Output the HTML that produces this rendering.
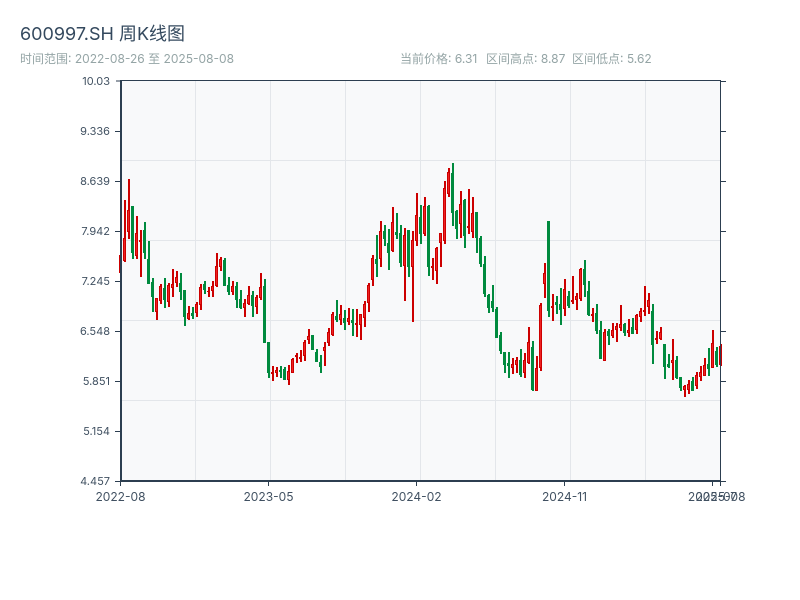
<!DOCTYPE html>
<html><head><meta charset="utf-8"><style>
html,body{margin:0;padding:0;background:#fff}
svg{display:block}
text{font-family:"Inter","Helvetica Neue",Arial,sans-serif}
</style></head><body>
<svg width="800" height="600" viewBox="0 0 800 600" xmlns="http://www.w3.org/2000/svg">
<rect width="800" height="600" fill="#fff"/>
<text x="20" y="40" font-size="18" fill="#34495e">600997.SH 周K线图</text>
<text x="20" y="63" font-size="12" fill="#95a5a6">时间范围: 2022-08-26 至 2025-08-08</text>
<text x="400" y="63" font-size="12" fill="#95a5a6">当前价格: 6.31</text>
<text x="486" y="63" font-size="12" fill="#95a5a6">区间高点: 8.87</text>
<text x="572" y="63" font-size="12" fill="#95a5a6">区间低点: 5.62</text>
<rect x="120" y="80" width="600" height="400" fill="#f8f9fa"/>
<path shape-rendering="crispEdges" stroke="#e3e6ea" stroke-width="1" fill="none" d="M195.5 80V480M270.5 80V480M345.5 80V480M420.5 80V480M495.5 80V480M570.5 80V480M645.5 80V480M120 160.5H720M120 240.5H720M120 320.5H720M120 400.5H720"/>
<path shape-rendering="crispEdges" stroke="#cc0000" stroke-width="2" fill="none" d="M121 255V273M125 200V262M129 179V239M137 216V259M141 230V277M157 298V320M161 284V304M169 283V307M173 269V297M177 271V287M189 306V320M197 302V317M201 284V310M209 287V297M213 281V297M217 253V287M221 257V271M233 281V295M245 299V317M249 286V305M257 295V314M261 273V300M273 366V381M277 367V377M289 365V385M293 358V373M297 353V363M301 350V362M305 340V361M309 329V344M325 342V366M329 328V346M333 312V336M341 305V325M349 308V325M357 309V337M361 314V340M365 301V327M369 283V312M373 255V286M381 221V267M393 207V252M405 228V301M413 231V322M417 193V246M425 197V236M433 258V280M437 247V284M441 233V267M445 181V244M449 168V197M461 191V238M469 189V234M473 197V238M513 358V374M517 357V373M525 353V378M529 327V364M537 356V391M541 303V371M545 263V298M553 294V321M565 279V316M573 276V304M577 293V310M581 268V301M593 308V322M605 329V361M613 323V338M617 323V342M621 305V331M629 319V337M637 314V334M641 308V322M645 286V316M649 293V314M657 331V344M661 327V340M673 339V380M685 385V397M689 380V394M697 372V389M701 366V381M705 358V376M713 330V368M721 344V366"/>
<path shape-rendering="crispEdges" stroke="#008a3e" stroke-width="2" fill="none" d="M133 206V259M145 222V259M149 241V284M153 278V312M165 278V308M181 273V300M185 290V326M193 307V319M205 281V294M225 258V286M229 277V295M237 282V308M241 290V309M253 291V317M265 279V343M269 342V378M281 366V378M285 367V380M313 335V350M317 349V362M321 355V373M337 300V322M345 310V330M353 309V336M377 235V277M385 225V246M389 229V270M397 213V239M401 225V267M409 230V277M421 205V244M429 205V276M453 163V226M457 210V239M465 199V248M477 212V253M481 236V267M485 256V297M489 294V313M493 285V312M497 307V338M501 332V354M505 352V373M509 352V378M521 349V377M533 341V391M549 221V317M557 296V314M561 288V325M569 291V308M585 260V297M589 281V316M597 304V334M601 321V359M609 329V345M625 323V336M633 318V334M653 304V364M665 344V379M669 354V368M677 356V379M681 377V391M693 377V391M709 348V376M717 347V367"/>
<path shape-rendering="crispEdges" stroke="#cc0000" stroke-width="3" fill="none" d="M120.5 255V273M124.5 238V261M128.5 210V232M136.5 233V256M140.5 240V242M156.5 298V312M160.5 286V301M168.5 285V302M172.5 284V288M176.5 277V283M188.5 313V319M196.5 304V313M200.5 287V305M208.5 291V292M212.5 286V291M216.5 266V286M220.5 259V267M232.5 286V292M244.5 303V308M248.5 295V304M256.5 297V307M260.5 287V298M272.5 372V374M276.5 370V373M288.5 371V380M292.5 359V373M296.5 355V357M300.5 357V359M304.5 342V356M308.5 336V340M324.5 347V351M328.5 332V343M332.5 314V335M340.5 314V320M348.5 318V322M356.5 323V325M360.5 314V325M364.5 304V318M368.5 285V303M372.5 258V280M380.5 231V259M392.5 222V251M404.5 235V266M412.5 240V267M416.5 215V241M424.5 206V234M432.5 266V268M436.5 248V271M440.5 233V243M444.5 188V241M448.5 172V194M460.5 204V224M468.5 226V228M472.5 213V232M512.5 364V368M516.5 360V365M524.5 360V373M528.5 342V363M536.5 368V391M540.5 305V368M544.5 273V284M552.5 306V308M564.5 289V309M572.5 300V302M576.5 296V300M580.5 269V299M592.5 314V316M604.5 332V361M612.5 330V336M616.5 326V330M620.5 324V328M628.5 330V333M636.5 315V330M640.5 311V317M644.5 310V312M648.5 300V307M656.5 338V340M660.5 332V339M672.5 360V363M684.5 386V390M688.5 384V390M696.5 375V386M700.5 372V377M704.5 365V376M712.5 343V368M720.5 346V365"/>
<path shape-rendering="crispEdges" stroke="#ee2222" stroke-width="1" fill="none" d="M120.5 256V272M124.5 239V260M128.5 211V231M136.5 234V255M156.5 299V311M160.5 287V300M168.5 286V301M172.5 285V287M176.5 278V282M188.5 314V318M196.5 305V312M200.5 288V304M212.5 287V290M216.5 267V285M220.5 260V266M232.5 287V291M244.5 304V307M248.5 296V303M256.5 298V306M260.5 288V297M276.5 371V372M288.5 372V379M292.5 360V372M304.5 343V355M308.5 337V339M324.5 348V350M328.5 333V342M332.5 315V334M340.5 315V319M348.5 319V321M360.5 315V324M364.5 305V317M368.5 286V302M372.5 259V279M380.5 232V258M392.5 223V250M404.5 236V265M412.5 241V266M416.5 216V240M424.5 207V233M436.5 249V270M440.5 234V242M444.5 189V240M448.5 173V193M460.5 205V223M472.5 214V231M512.5 365V367M516.5 361V364M524.5 361V372M528.5 343V362M536.5 369V390M540.5 306V367M544.5 274V283M564.5 290V308M576.5 297V299M580.5 270V298M604.5 333V360M612.5 331V335M616.5 327V329M620.5 325V327M628.5 331V332M636.5 316V329M640.5 312V316M648.5 301V306M660.5 333V338M672.5 361V362M684.5 387V389M688.5 385V389M696.5 376V385M700.5 373V376M704.5 366V375M712.5 344V367M720.5 347V364"/>
<path shape-rendering="crispEdges" stroke="#008a3e" stroke-width="3" fill="none" d="M132.5 206V253M144.5 230V253M148.5 259V284M152.5 282V297M164.5 288V300M180.5 283V292M184.5 290V317M192.5 313V316M204.5 284V290M224.5 260V286M228.5 285V292M236.5 286V300M240.5 299V308M252.5 295V306M264.5 286V343M268.5 342V373M280.5 370V372M284.5 369V380M312.5 335V350M316.5 352V362M320.5 362V367M336.5 316V320M344.5 318V323M352.5 320V323M376.5 259V264M384.5 231V239M388.5 243V253M396.5 232V235M400.5 233V263M408.5 230V267M420.5 217V234M428.5 206V267M452.5 173V213M456.5 211V229M464.5 200V236M476.5 212V238M480.5 238V264M484.5 264V294M488.5 295V308M492.5 301V308M496.5 309V338M500.5 335V351M504.5 352V365M508.5 363V366M520.5 360V375M532.5 347V390M548.5 221V311M556.5 302V305M560.5 304V310M568.5 296V306M584.5 269V285M588.5 291V315M596.5 313V331M600.5 330V359M608.5 331V336M624.5 324V333M632.5 327V334M652.5 311V345M664.5 344V367M668.5 364V367M676.5 360V378M680.5 377V388M692.5 381V391M708.5 364V369M716.5 351V365"/>
<path shape-rendering="crispEdges" stroke="#2c3e50" fill="none" d="M120 81H116M120 131.5H115M120 181.5H115M120 231.5H115M120 281.5H115M120 331.5H115M120 381.5H115M120 431.5H115M120 481.5H115" stroke-width="1"/>
<path shape-rendering="crispEdges" stroke="#2c3e50" fill="none" stroke-width="2" d="M121 80V482M120 481H721"/>
<path shape-rendering="crispEdges" stroke="#2c3e50" fill="none" stroke-width="1" d="M120 80.5H720M720.5 80V481M720 81.5H726M720 131.5H726M720 181.5H726M720 231.5H726M720 281.5H726M720 331.5H726M720 381.5H726M720 431.5H726M720 481.5H726M120.5 482V486M268.5 482V486M416.5 482V486M564.5 482V486M712.5 482V486M720.5 482V486"/>
<g font-size="11" fill="#2c3e50" text-anchor="end" opacity=".9">
<text x="110" y="85">10.03</text>
<text x="110" y="135">9.336</text>
<text x="110" y="185">8.639</text>
<text x="110" y="235">7.942</text>
<text x="110" y="285">7.245</text>
<text x="110" y="335">6.548</text>
<text x="110" y="385">5.851</text>
<text x="110" y="435">5.154</text>
<text x="110" y="485">4.457</text>
</g>
<g font-size="12" fill="#2c3e50" text-anchor="middle" opacity=".9">
<text x="120.5" y="501">2022-08</text>
<text x="268.5" y="501">2023-05</text>
<text x="416.5" y="501">2024-02</text>
<text x="564.5" y="501">2024-11</text>
<text x="712.5" y="501">2025-07</text>
<text x="720.5" y="501">2025-08</text>
</g>
</svg>
</body></html>
